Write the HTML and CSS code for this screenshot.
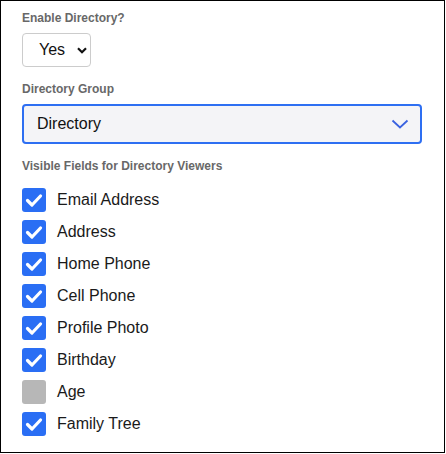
FILE: index.html
```html
<!DOCTYPE html>
<html>
<head>
    <title>Directory Settings</title>
    <link rel="stylesheet" href="styles.css">
</head>
<body>
    <div class="settings-panel">
        <div class="field">
            <div class="field-label">Enable Directory?</div>
            <div class="small-select">
                <span>Yes</span>
                <svg width="10" height="7" viewBox="0 0 10 7"><path d="M1 1.2 L5 5.2 L9 1.2" fill="none" stroke="#111" stroke-width="2.2"/></svg>
            </div>
        </div>

        <div class="field">
            <div class="field-label">Directory Group</div>
            <div class="big-select">
                <span>Directory</span>
                <svg width="18" height="10" viewBox="0 0 18 10"><path d="M1.5 1.5 L9 8.5 L16.5 1.5" fill="none" stroke="#3a62e0" stroke-width="1.8"/></svg>
            </div>
        </div>

        <div class="field">
            <div class="field-label">Visible Fields for Directory Viewers</div>
            <div class="check-list">
                <div class="check-row"><span class="box on"><svg viewBox="0 0 24 24"><path d="M5.5 12.5 L10 17 L18.5 8" fill="none" stroke="#fff" stroke-width="3.2" stroke-linecap="round" stroke-linejoin="round"/></svg></span>Email Address</div>
                <div class="check-row"><span class="box on"><svg viewBox="0 0 24 24"><path d="M5.5 12.5 L10 17 L18.5 8" fill="none" stroke="#fff" stroke-width="3.2" stroke-linecap="round" stroke-linejoin="round"/></svg></span>Address</div>
                <div class="check-row"><span class="box on"><svg viewBox="0 0 24 24"><path d="M5.5 12.5 L10 17 L18.5 8" fill="none" stroke="#fff" stroke-width="3.2" stroke-linecap="round" stroke-linejoin="round"/></svg></span>Home Phone</div>
                <div class="check-row"><span class="box on"><svg viewBox="0 0 24 24"><path d="M5.5 12.5 L10 17 L18.5 8" fill="none" stroke="#fff" stroke-width="3.2" stroke-linecap="round" stroke-linejoin="round"/></svg></span>Cell Phone</div>
                <div class="check-row"><span class="box on"><svg viewBox="0 0 24 24"><path d="M5.5 12.5 L10 17 L18.5 8" fill="none" stroke="#fff" stroke-width="3.2" stroke-linecap="round" stroke-linejoin="round"/></svg></span>Profile Photo</div>
                <div class="check-row"><span class="box on"><svg viewBox="0 0 24 24"><path d="M5.5 12.5 L10 17 L18.5 8" fill="none" stroke="#fff" stroke-width="3.2" stroke-linecap="round" stroke-linejoin="round"/></svg></span>Birthday</div>
                <div class="check-row"><span class="box off"></span>Age</div>
                <div class="check-row"><span class="box on"><svg viewBox="0 0 24 24"><path d="M5.5 12.5 L10 17 L18.5 8" fill="none" stroke="#fff" stroke-width="3.2" stroke-linecap="round" stroke-linejoin="round"/></svg></span>Family Tree</div>
            </div>
        </div>
    </div>
</body>
</html>
```

FILE: styles.css
```css
body {
    margin: 0;
    background-color: #ffffff;
    font-family: "Liberation Sans", Arial, sans-serif;
    color: #111111;
}

.settings-panel {
    box-sizing: border-box;
    width: 445px;
    height: 453px;
    border: 1px solid #000000;
    padding: 10px 21px 0 21px;
}

.field {
    margin-bottom: 15px;
}

.field-label {
    font-size: 12px;
    font-weight: bold;
    color: #686868;
    line-height: 14px;
    margin-bottom: 8px;
}

.small-select {
    box-sizing: border-box;
    width: 69px;
    height: 34px;
    border: 1px solid #cccccc;
    border-radius: 4px;
    display: flex;
    align-items: center;
    padding: 0 0 0 16px;
    font-size: 16px;
    gap: 12px;
}

.big-select {
    box-sizing: border-box;
    width: 400px;
    height: 40px;
    border: 2px solid #2e6ff2;
    border-radius: 4px;
    background-color: #f4f4f7;
    display: flex;
    align-items: center;
    justify-content: space-between;
    padding: 0 11px 0 13px;
    font-size: 16px;
}

.check-list {
    display: flex;
    flex-direction: column;
    gap: 8px;
    margin-top: 15px;
}

.check-row {
    display: flex;
    align-items: center;
    font-size: 16px;
    color: #1a1a1a;
    gap: 11px;
    height: 24px;
}

.box {
    width: 24px;
    height: 24px;
    border-radius: 3px;
    display: block;
}

.box svg {
    width: 24px;
    height: 24px;
    display: block;
}

.box.on {
    background-color: #2a6ef4;
}

.box.off {
    background-color: #b7b7b7;
}
```
